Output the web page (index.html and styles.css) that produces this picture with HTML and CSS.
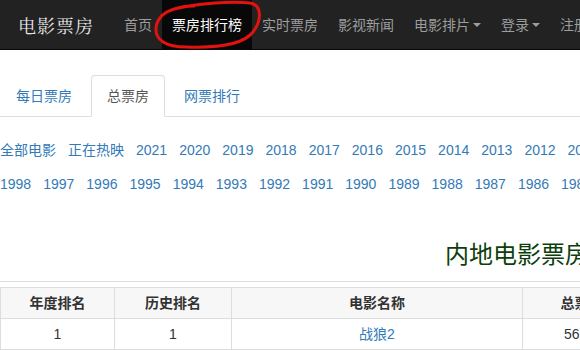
FILE: index.html
```html
<!doctype html>
<html lang="zh-CN">
  <head>
    <meta charset="UTF-8" />
    <title>电影票房</title>
    <link rel="stylesheet" href="styles.css">
  </head>
  <body>
    <nav class="navbar">
      <a href="#" class="brand">电影票房</a>
      <ul class="nav-list">
        <li><a href="#" class="nav-link">首页</a></li>
        <li><a href="#" class="nav-link active">票房排行榜</a></li>
        <li><a href="#" class="nav-link">实时票房</a></li>
        <li><a href="#" class="nav-link">影视新闻</a></li>
        <li><a href="#" class="nav-link">电影排片<span class="caret"></span></a></li>
        <li><a href="#" class="nav-link">登录<span class="caret"></span></a></li>
        <li><a href="#" class="nav-link">注册</a></li>
      </ul>
      <!-- hand-drawn mark around the active item -->
      <svg class="scribble" width="300" height="52" viewBox="0 0 300 52">
        <path d="M174 9 C200 3 232 1 250 3 C262 5 262 20 253 32 C243 45 214 48 186 47 C166 47 155 40 156 28 C157 16 166 10 182 7 C186 6 190 6 194 6"
          fill="none" stroke="#e2130f" stroke-width="3" stroke-linecap="round" />
      </svg>
    </nav>

    <main class="page">
      <ul class="tabs">
        <li><a href="#" class="tab">每日票房</a></li>
        <li><a href="#" class="tab active">总票房</a></li>
        <li><a href="#" class="tab">网票排行</a></li>
      </ul>

      <div class="years">
        <div class="year-row">
          <a href="#">全部电影</a><a href="#">正在热映</a>
          <a href="#">2021</a><a href="#">2020</a><a href="#">2019</a><a href="#">2018</a>
          <a href="#">2017</a><a href="#">2016</a><a href="#">2015</a><a href="#">2014</a>
          <a href="#">2013</a><a href="#">2012</a><a href="#">2011</a><a href="#">2010</a>
        </div>
        <div class="year-row">
          <a href="#">1998</a><a href="#">1997</a><a href="#">1996</a><a href="#">1995</a>
          <a href="#">1994</a><a href="#">1993</a><a href="#">1992</a><a href="#">1991</a>
          <a href="#">1990</a><a href="#">1989</a><a href="#">1988</a><a href="#">1987</a>
          <a href="#">1986</a><a href="#">1985</a><a href="#">1984</a>
        </div>
      </div>

      <h2 class="board-title">内地电影票房总排行榜</h2>
      <hr class="divider" />

      <table class="rank-table">
        <thead>
          <tr>
            <th class="col-year">年度排名</th>
            <th class="col-hist">历史排名</th>
            <th class="col-name">电影名称</th>
            <th class="col-total">总票房</th>
            <th>平均票价</th>
            <th>场均人次</th>
            <th>上映年份</th>
          </tr>
        </thead>
        <tbody>
          <tr>
            <td>1</td>
            <td>1</td>
            <td><a href="#">战狼2</a></td>
            <td>56.39</td>
            <td>35</td>
            <td>38</td>
            <td>2017</td>
          </tr>
        </tbody>
      </table>
    </main>
  </body>
</html>
```

FILE: styles.css
```css
* {
  margin: 0;
  padding: 0;
  box-sizing: border-box;
}

body {
  font-family: "Liberation Sans", "Noto Sans CJK SC", sans-serif;
  font-size: 14px;
  line-height: 20px;
  color: #333;
  background: #fff;
  overflow: hidden;
}

a {
  text-decoration: none;
}

.navbar {
  position: relative;
  display: flex;
  align-items: center;
  width: 1140px;
  height: 50px;
  background: #222;
  border-bottom: 1px solid #080808;
}

.brand {
  flex-shrink: 0;
  padding: 0 20px 0 18px;
  font-family: "Noto Serif CJK SC", "Liberation Serif", "Noto Sans CJK SC", serif;
  font-size: 18px;
  letter-spacing: 1px;
  white-space: nowrap;
  color: #e6e6e6;
}

.nav-list {
  display: flex;
  flex-shrink: 0;
  list-style: none;
  height: 49px;
}

.nav-link {
  display: flex;
  align-items: center;
  height: 100%;
  padding: 0 10px;
  color: #9d9d9d;
  white-space: nowrap;
}

.nav-link.active {
  color: #fff;
  background: #080808;
}

.caret {
  display: inline-block;
  margin-left: 3px;
  border-top: 4px solid #9d9d9d;
  border-left: 4px solid transparent;
  border-right: 4px solid transparent;
}

.scribble {
  position: absolute;
  top: 0;
  left: 0;
  pointer-events: none;
}

.page {
  width: 1140px;
}

.tabs {
  display: flex;
  list-style: none;
  margin-top: 25px;
  border-bottom: 1px solid #ddd;
}

.tabs li {
  margin-bottom: -1px;
  margin-right: 3px;
}

.tab {
  display: block;
  padding: 10px 15px;
  color: #337ab7;
  border: 1px solid transparent;
  border-radius: 4px 4px 0 0;
}

.tab.active {
  color: #555;
  background: #fff;
  border-color: #ddd;
  border-bottom-color: transparent;
}

.years {
  margin-top: 23px;
}

.year-row {
  display: flex;
  gap: 12px;
  white-space: nowrap;
}

.year-row + .year-row {
  margin-top: 14px;
}

.year-row a {
  color: #337ab7;
}

.board-title {
  margin-top: 48px;
  padding-right: 10px;
  text-align: center;
  font-size: 24px;
  line-height: 26px;
  font-weight: normal;
  color: #0d3f0d;
}

.divider {
  margin: 13px 0 5px;
  border: 0;
  border-top: 1px solid #ddd;
}

.rank-table {
  width: 100%;
  border-collapse: collapse;
  border-top: 1px solid #ddd;
}

.rank-table th,
.rank-table td {
  padding: 5px 8px;
  text-align: center;
  border: 1px solid #ddd;
  line-height: 20px;
}

.rank-table th {
  background: #f7f7f7;
  font-weight: bold;
  color: #333;
}

.rank-table td a {
  color: #337ab7;
}

.col-year {
  width: 114px;
}

.col-hist {
  width: 117px;
}

.col-name {
  width: 291px;
}

.col-total {
  width: 118px;
}
```
